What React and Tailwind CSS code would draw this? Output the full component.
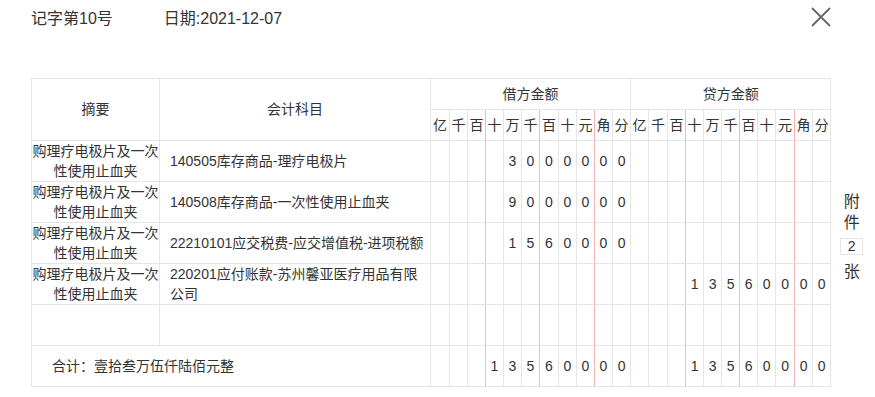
import React from "react";

const units = ["亿", "千", "百", "十", "万", "千", "百", "十", "元", "角", "分"];
const debitCols = ["w-[19px]", "w-[18px]", "w-[18px]", "w-[18px]", "w-[18px]", "w-[18px]", "w-[19px]", "w-[18px]", "w-[18px]", "w-[18px]", "w-[18px]"];
const creditCols = ["w-[18px]", "w-[19px]", "w-[18px]", "w-[18px]", "w-[18px]", "w-[18px]", "w-[18px]", "w-[18px]", "w-[19px]", "w-[18px]", "w-[18px]"];

// pad the amount to the left so it lines up under 亿..分
function toCells(amount) {
  const chars = (amount || "").split("");
  return Array(11 - chars.length).fill("").concat(chars);
}

// right border colour: blue after 百 and 千, red before 角
function rightBorder(i) {
  if (i === 2 || i === 5) return "border-r-[#aad4f2]";
  if (i === 8) return "border-r-[#f4b4b4]";
  return "border-r-[#e5e5e5]";
}

const rows = [
  { summary: true, account: "140505库存商品-理疗电极片", debit: "3000000", credit: "" },
  { summary: true, account: "140508库存商品-一次性使用止血夹", debit: "9000000", credit: "" },
  { summary: true, account: "22210101应交税费-应交增值税-进项税额", debit: "1560000", credit: "" },
  { summary: true, account: ["220201应付账款-苏州馨亚医疗用品有限", "公司"], debit: "", credit: "13560000" },
  { summary: false, account: "", debit: "", credit: "" },
];

const cell = "p-0 border-r border-b border-b-[#e5e5e5]";

function DigitCells({ amount }) {
  return toCells(amount).map((d, i) => (
    <td key={i} className={`${cell} ${rightBorder(i)} text-center`}>
      {d}
    </td>
  ));
}

export default function App() {
  return (
    <div className="w-[875px] h-[397px] bg-white text-[#333] font-['Liberation_Sans','Noto_Sans_CJK_SC',sans-serif] overflow-hidden">
      <div className="flex h-[38px] items-center pl-[31px] text-[16px]">
        <span>记字第10号</span>
        <span className="ml-[51px]">日期:2021-12-07</span>
        <svg className="ml-auto mr-[44px] self-start mt-[7px]" width="20" height="20" viewBox="0 0 20 20">
          <path d="M1 1 L19 19 M19 1 L1 19" stroke="#666" strokeWidth="1.8" fill="none" />
        </svg>
      </div>

      <div className="flex mt-[40px]">
        <table className="ml-[31px] w-[800px] table-fixed border-separate border-spacing-0 border-l border-t border-[#e5e5e5] text-[14px]">
          <colgroup>
            <col className="w-[128px]" />
            <col className="w-[271px]" />
            {debitCols.map((w, i) => (
              <col key={"d" + i} className={w} />
            ))}
            {creditCols.map((w, i) => (
              <col key={"c" + i} className={w} />
            ))}
          </colgroup>
          <thead>
            <tr>
              <th rowSpan={2} className={`${cell} border-r-[#e5e5e5] font-normal`}>摘要</th>
              <th rowSpan={2} className={`${cell} border-r-[#e5e5e5] font-normal`}>会计科目</th>
              <th colSpan={11} className={`${cell} border-r-[#e5e5e5] font-normal h-[31px]`}>借方金额</th>
              <th colSpan={11} className={`${cell} border-r-[#e5e5e5] font-normal h-[31px]`}>贷方金额</th>
            </tr>
            <tr>
              {units.map((u, i) => (
                <th key={"d" + i} className={`${cell} ${rightBorder(i)} font-normal h-[31px] whitespace-nowrap`}>{u}</th>
              ))}
              {units.map((u, i) => (
                <th key={"c" + i} className={`${cell} ${rightBorder(i)} font-normal h-[31px] whitespace-nowrap`}>{u}</th>
              ))}
            </tr>
          </thead>
          <tbody>
            {rows.map((r, idx) => (
              <tr key={idx}>
                <td className={`${cell} border-r-[#e5e5e5] h-[41px] text-center leading-[20px]`}>
                  {r.summary && (
                    <>
                      购理疗电极片及一次
                      <br />
                      性使用止血夹
                    </>
                  )}
                </td>
                <td className={`${cell} border-r-[#e5e5e5] pl-[10px] leading-[20px] whitespace-nowrap`}>
                  {Array.isArray(r.account) ? (
                    <>
                      {r.account[0]}
                      <br />
                      {r.account[1]}
                    </>
                  ) : (
                    r.account
                  )}
                </td>
                <DigitCells amount={r.debit} />
                <DigitCells amount={r.credit} />
              </tr>
            ))}
            <tr>
              <td colSpan={2} className={`${cell} border-r-[#e5e5e5] h-[41px] pl-[20px]`}>
                合计：壹拾叁万伍仟陆佰元整
              </td>
              <DigitCells amount="13560000" />
              <DigitCells amount="13560000" />
            </tr>
          </tbody>
        </table>

        <div className="w-[41px] flex flex-col items-center pt-[113px] text-[16px] leading-[21px]">
          <span>附</span>
          <span>件</span>
          <span className="mt-[5px] w-[23px] h-[17px] border border-[#e5e5e5] text-[14px] leading-[15px] text-center">2</span>
          <span className="mt-[6px]">张</span>
        </div>
      </div>
    </div>
  );
}
